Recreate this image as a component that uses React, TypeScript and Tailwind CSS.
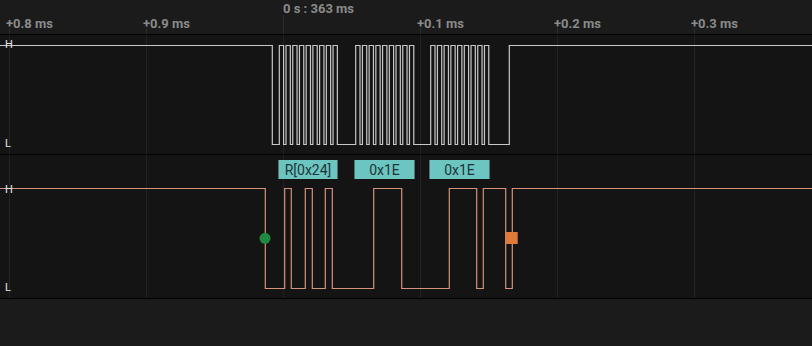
const GRID = [9, 146, 283, 420, 557, 694];

const TICKS = [
  { x: 9, label: '+0.8 ms' },
  { x: 146, label: '+0.9 ms' },
  { x: 420, label: '+0.1 ms' },
  { x: 557, label: '+0.2 ms' },
  { x: 694, label: '+0.3 ms' },
];

// SCL: three bursts of 9 clocks
function sclPoints(hi: number, lo: number) {
  const pts: [number, number][] = [[0, hi], [272.3, hi], [272.3, lo]];
  const starts = [279.3, 355.7, 430.7];
  const period = 6.72;
  const high = 4.3;
  starts.forEach((s) => {
    for (let k = 0; k < 9; k++) {
      const r = s + k * period;
      pts.push([r, lo], [r, hi], [r + high, hi], [r + high, lo]);
    }
  });
  pts.push([509.3, lo], [509.3, hi], [812, hi]);
  return pts.map((p) => p.join(',')).join(' ');
}

// SDA edges
function sdaPoints(hi: number, lo: number) {
  const edges = [265.3, 284.7, 291.3, 305.3, 312.3, 325.3, 332.3, 373.7, 401.7, 449.3, 476.7, 483.3, 505.7, 512.3];
  const pts: [number, number][] = [[0, hi]];
  let level = hi;
  edges.forEach((x) => {
    const next = level === hi ? lo : hi;
    pts.push([x, level], [x, next]);
    level = next;
  });
  pts.push([812, level]);
  return pts.map((p) => p.join(',')).join(' ');
}

function GridLines({ height }: { height: number }) {
  return (
    <>
      {GRID.map((x) => (
        <line key={x} x1={x + 0.5} x2={x + 0.5} y1={0} y2={height} stroke="#222222" strokeWidth={1} />
      ))}
    </>
  );
}

function Level({ text, y }: { text: string; y: number }) {
  return (
    <text x={5} y={y} fontSize={11} fill="#e6e6e6">
      {text}
    </text>
  );
}

const DECODES = [
  { x: 278, w: 60, text: 'R[0x24]' },
  { x: 354, w: 61, text: '0x1E' },
  { x: 429, w: 61, text: '0x1E' },
];

export default function App() {
  return (
    <div className="w-[812px] h-[346px] bg-[#1b1b1b] flex flex-col font-['Roboto',sans-serif] overflow-hidden">
      {/* time ruler */}
      <div className="h-[35px] shrink-0 border-b border-black">
        <svg width={812} height={34} className="block">
          {TICKS.map((t) => (
            <g key={t.x}>
              <line x1={t.x + 0.5} x2={t.x + 0.5} y1={28} y2={34} stroke="#2c2c2c" />
              <text x={t.x - 3} y={28} fontSize={13} fontWeight={700} fill="#8a8a8a">
                {t.label}
              </text>
            </g>
          ))}
          <line x1={283.5} x2={283.5} y1={15} y2={34} stroke="#2c2c2c" />
          <text x={283} y={13} fontSize={13} fontWeight={700} fill="#8a8a8a">
            0 s : 363 ms
          </text>
        </svg>
      </div>

      {/* SCL channel */}
      <div className="h-[120px] shrink-0 border-b border-black bg-[#141414]">
        <svg width={812} height={119} className="block">
          <GridLines height={119} />
          <polyline points={sclPoints(10.5, 109.5)} fill="none" stroke="#c8c8c8" strokeWidth={1.2} />
          <Level text="H" y={13.4} />
          <Level text="L" y={112.2} />
        </svg>
      </div>

      {/* SDA channel */}
      <div className="relative h-[144px] shrink-0 border-b border-black bg-[#141414]">
        <svg width={812} height={143} className="block">
          <GridLines height={143} />
          <polyline points={sdaPoints(33.5, 133.5)} fill="none" stroke="#d4937a" strokeWidth={1.2} />
          <circle cx={265} cy={83.3} r={5.5} fill="#1f8a3f" />
          <rect x={505.7} y={77} width={12} height={12} fill="#e07a3a" />
          <Level text="H" y={37.7} />
          <Level text="L" y={136.2} />
        </svg>
        {DECODES.map((d) => (
          <div
            key={d.x}
            className="absolute top-[5px] h-[19px] flex items-center justify-center bg-[#6cc5c1] border-x border-[#4f6e6d] text-[14px] leading-none text-[#1d3536]"
            style={{ left: d.x, width: d.w }}
          >
            {d.text}
          </div>
        ))}
      </div>

      <div className="flex-1" />
    </div>
  );
}
